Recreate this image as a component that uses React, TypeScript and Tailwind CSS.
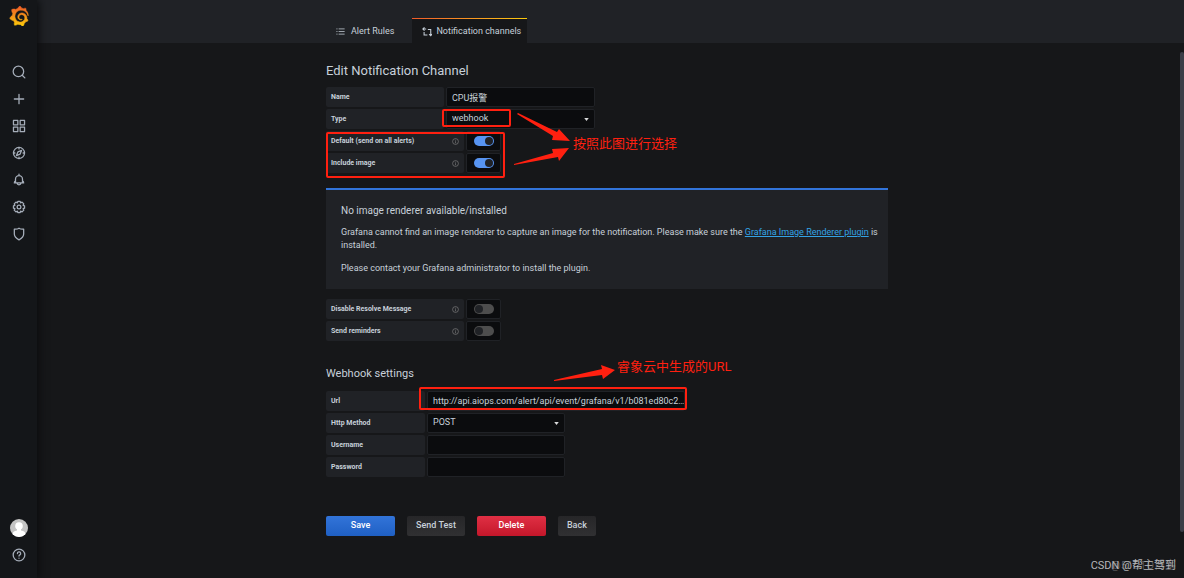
import { useState } from 'react';
import type { ReactNode } from 'react';
import { SiGrafana } from 'react-icons/si';

const NAV_ICONS: { label: string; icon: ReactNode }[] = [
  {
    label: 'Search',
    icon: (
      <>
        <circle cx="11" cy="11" r="9" />
        <path d="M17.500 17.500 22 22" />
      </>
    ),
  },
  { label: 'Create', icon: <path d="M12 4v16M4 12h16" /> },
  {
    label: 'Dashboards',
    icon: <path d="M2.5 2.5h7.5v7.5h-7.5zM14 2.5h7.5v7.5h-7.5zM2.5 14h7.5v7.5h-7.5zM14 14h7.5v7.5h-7.5z" />,
  },
  {
    label: 'Explore',
    icon: (
      <>
        <circle cx="12" cy="12" r="9.5" />
        <path d="m16.5 7.5-2.6 6.4-6.4 2.6 2.6-6.4zM12 2.5V5M12 19v2.5M2.5 12H5M19 12h2.5" />
      </>
    ),
  },
  {
    label: 'Alerting',
    icon: <path d="M12 2v2.5M6 17v-6.500a6 6 0 0 1 12 0V17M6 13.500c-1.500.500-2 1.500-2 3.500h16c0-2-.500-3-2-3.500M8.500 17.500a3.600 3.600 0 0 0 7 0" />,
  },
  {
    label: 'Configuration',
    icon: (
      <>
        <circle cx="12" cy="12" r="3.2" />
        <path d="m10 2.500h4l.700 2.300 2.600-1.100 2.900 2.900-1.100 2.600 2.400.800v4l-2.400.800 1.100 2.600-2.900 2.900-2.600-1.100-.700 2.300h-4l-.700-2.300-2.600 1.100-2.900-2.900 1.100-2.600-2.400-.800v-4l2.400-.800-1.100-2.600 2.900-2.900 2.600 1.100z" />
      </>
    ),
  },
  {
    label: 'Server Admin',
    icon: <path d="M4 3.500c3 .700 5.500.200 8-1.500 2.500 1.700 5 2.200 8 1.500v8.500c0 4.500-3 7.500-8 10-5-2.500-8-5.500-8-10z" />,
  },
];

function NavLink({ label, children }: { label: string; children: ReactNode }) {
  return (
    <a href="#" aria-label={label} className="flex h-[27px] items-center justify-center text-[#a5adb9]">
      <svg viewBox="0 0 24 24" className="size-[14px]" fill="none" stroke="currentColor" strokeWidth="2.2" strokeLinecap="round" strokeLinejoin="round">
        {children}
      </svg>
    </a>
  );
}

function Sidebar() {
  return (
    <nav className="z-10 flex w-[37px] shrink-0 flex-col bg-[#141619] pt-1.5 shadow-[2px_0_8px_#0b0c0e]">
      <svg className="absolute size-0" aria-hidden="true">
        <linearGradient id="flame" x1="0" y1="0" x2="0" y2="1">
          <stop offset="0" stopColor="#f05a28" />
          <stop offset="1" stopColor="#fbca0a" />
        </linearGradient>
      </svg>
      <a href="#" aria-label="Home" className="mb-8 flex justify-center">
        <SiGrafana size={20} fill="url(#flame)" stroke="url(#flame)" strokeWidth={0.7} />
      </a>
      {NAV_ICONS.map((item) => (
        <NavLink key={item.label} label={item.label}>{item.icon}</NavLink>
      ))}
      <div className="mt-auto pb-2.5">
        <a href="#" aria-label="Profile" className="flex h-[27px] items-center justify-center">
          <svg viewBox="0 0 18 18" className="size-[18px]">
            <clipPath id="avatar"><circle cx="9" cy="9" r="9" /></clipPath>
            <g clipPath="url(#avatar)">
              <rect width="18" height="18" fill="#c4c4c4" />
              <circle cx="9" cy="7" r="3.8" fill="#fff" />
              <path d="M7 9h4v2.500c3 .500 4.500 1.500 4.500 4V18h-13v-2.500c0-2.500 1.500-3.500 4.500-4z" fill="#fff" />
            </g>
          </svg>
        </a>
        <NavLink label="Help">
          <circle cx="12" cy="12" r="10" />
          <path d="M9.300 9.500a2.800 2.800 0 1 1 4.200 2.300c-1 .600-1.500 1-1.500 2M12 17.300v.2" />
        </NavLink>
      </div>
    </nav>
  );
}

function Tabs() {
  return (
    <header className="bg-[#202226] pr-[7px] pt-[18px]">
      <div className="mx-auto flex h-[25px] max-w-[562px] text-[9px] text-[#c7d0d9]">
        <a href="#" className="flex items-center gap-1.5 pl-2.5 pr-2 pt-0.5">
          <svg viewBox="0 0 24 24" className="size-[9px]" stroke="currentColor" strokeWidth="2">
            <path d="M1 5h3M7 5h16M1 12h3M7 12h16M1 19h3M7 19h16" />
          </svg>
          Alert Rules
        </a>
        <a href="#" aria-current="page" className="relative ml-2.5 flex items-center gap-1 bg-[#161719] pl-2.5 pr-1.5 pt-0.5">
          <span className="absolute inset-x-0 top-0 h-px bg-linear-to-r from-[#f05a28] to-[#fbca0a]" />
          <svg viewBox="0 0 24 24" className="size-[10px]" fill="none" stroke="currentColor" strokeWidth="2.5">
            <path d="M6 1 2 5l4 4M2 5h8M5 12v7h8M14 6h7v15M17 17l4 4 3-4" />
          </svg>
          Notification channels
        </a>
      </div>
    </header>
  );
}

const labelClass = 'flex h-5 shrink-0 items-center rounded-xs bg-[#202226] px-[5px] text-[7px] font-bold text-[#c7d0d9]';
const fieldClass = 'block h-5 w-full appearance-none rounded-xs border border-[#202226] bg-[#0b0c0e] pl-[5px] text-[9px] text-[#c7d0d9]';

function Caret() {
  return (
    <svg viewBox="0 0 6 4" className="pointer-events-none absolute right-1.5 top-[9px] h-[3px] w-[5px]" fill="#d8d9da">
      <path d="M0 0h6L3 4z" />
    </svg>
  );
}

function Field({ id, label, wide, children }: { id: string; label: string; wide?: boolean; children: ReactNode }) {
  return (
    <div className="flex gap-0.5">
      <label htmlFor={id} className={`${labelClass} ${wide ? 'w-[118px]' : 'w-[99px]'}`}>{label}</label>
      {children}
    </div>
  );
}

function SwitchRow({ id, label, initial }: { id: string; label: string; initial: boolean }) {
  const [on, setOn] = useState(initial);
  return (
    <div className="flex gap-0.5">
      <label htmlFor={id} className={`${labelClass} w-[138px] justify-between`}>
        {label}
        <svg viewBox="0 0 24 24" className="size-[7px] text-[#8e8e8e]" fill="none" stroke="currentColor" strokeWidth="2">
          <circle cx="12" cy="12" r="10" />
          <path d="M12 11v7M12 6v3" />
        </svg>
      </label>
      <div className="flex h-5 w-[35px] items-center justify-center rounded-xs border border-[#202226] bg-[#0b0c0e]">
        <input
          id={id}
          type="checkbox"
          role="switch"
          checked={on}
          onChange={(e) => setOn(e.target.checked)}
          className="flex h-2.5 w-5 appearance-none items-center rounded-full bg-[#4d4d4d] px-px before:size-2 before:rounded-full before:bg-[#202226] checked:justify-end checked:bg-[#5794f2]"
        />
      </div>
    </div>
  );
}

// red boxes, arrows and notes drawn over the form
function Annotations() {
  return (
    <div className="pointer-events-none absolute left-0 top-0 text-[13px] leading-[18px] text-[#ff2010]">
      <svg width="420" height="380" viewBox="0 0 420 380" className="overflow-visible" fill="none" stroke="#ff2010" strokeWidth="2">
        <rect x="117" y="67" width="67" height="16" rx="1" />
        <rect x="1" y="90" width="177" height="44" rx="1" />
        <rect x="94" y="345" width="266" height="21" rx="1" />
        <g fill="#ff2010" stroke="none">
          <path d="m191 71 36 22-1 4 18 1-11-12-2 3-39-19z" />
          <path d="m188 122 44-8 1 4 10-13-17 1 1 4-39 11z" />
          <path d="m228 338 48-6 1 4 12-9-14-5 1 4-48 11z" />
        </g>
      </svg>
      <span className="absolute left-[247px] top-[92px] whitespace-nowrap">按照此图进行选择</span>
      <span className="absolute left-[291px] top-[315px] whitespace-nowrap">睿象云中生成的URL</span>
    </div>
  );
}

const buttonClass = 'h-5 rounded-xs text-[9px] font-medium';

export default function App() {
  return (
    <div className="relative flex min-h-screen bg-[#161719] font-[Roboto,'Noto_Sans_CJK_SC',sans-serif] text-[#c7d0d9]">
      <Sidebar />
      <div className="min-w-0 flex-1">
        <Tabs />
        <main className="pr-[7px]">
          <form className="relative mx-auto max-w-[562px] pt-5" onSubmit={(e) => e.preventDefault()}>
            <h1 className="mb-2 text-[13px] leading-4">Edit Notification Channel</h1>
            <div className="flex flex-col gap-0.5">
              <Field id="name" label="Name" wide>
                <input id="name" defaultValue="CPU报警" className={`${fieldClass} max-w-[149px]`} />
              </Field>
              <Field id="type" label="Type" wide>
                <div className="relative w-[149px]">
                  <select id="type" className={fieldClass}><option>webhook</option></select>
                  <Caret />
                </div>
              </Field>
              <SwitchRow id="default" label="Default (send on all alerts)" initial />
              <SwitchRow id="image" label="Include image" initial />
            </div>

            <section className="mb-2.5 mt-[15px] border-t-2 border-[#3274d9] bg-[#202226] py-[14px] pl-[15px] pr-1 text-[9px] leading-[13px]">
              <h2 className="mb-2 text-[10px] leading-[14px]">No image renderer available/installed</h2>
              <p className="mb-2.5">
                Grafana cannot find an image renderer to capture an image for the notification. Please make sure the{' '}
                <a href="#" className="text-[#33a2e5] underline">Grafana Image Renderer plugin</a> is installed.
              </p>
              <p>Please contact your Grafana administrator to install the plugin.</p>
            </section>

            <div className="flex flex-col gap-0.5">
              <SwitchRow id="resolve" label="Disable Resolve Message" initial={false} />
              <SwitchRow id="reminders" label="Send reminders" initial={false} />
            </div>

            <h2 className="mb-[9px] mt-[25px] text-[11px] leading-4">Webhook settings</h2>
            <div className="flex flex-col gap-0.5">
              <Field id="url" label="Url">
                <input id="url" defaultValue="http://api.aiops.com/alert/api/event/grafana/v1/b081ed80c2…" className={`${fieldClass} max-w-[258px]`} />
              </Field>
              <Field id="method" label="Http Method">
                <div className="relative w-[138px]">
                  <select id="method" className={fieldClass}><option>POST</option></select>
                  <Caret />
                </div>
              </Field>
              <Field id="username" label="Username">
                <input id="username" className={`${fieldClass} max-w-[138px]`} />
              </Field>
              <Field id="password" label="Password">
                <input id="password" type="password" className={`${fieldClass} max-w-[138px]`} />
              </Field>
            </div>

            <div className="mt-[39px] flex gap-3">
              <button type="submit" className={`${buttonClass} w-[69px] bg-linear-to-b from-[#3274d9] to-[#1f60c4] text-white`}>Save</button>
              <button type="button" className={`${buttonClass} bg-linear-to-b from-[#262628] to-[#303032] px-[9px]`}>Send Test</button>
              <button type="button" className={`${buttonClass} w-[69px] bg-linear-to-b from-[#e02f44] to-[#c4162a] text-white`}>Delete</button>
              <button type="button" className={`${buttonClass} bg-linear-to-b from-[#262628] to-[#303032] px-[9px]`}>Back</button>
            </div>
            <Annotations />
          </form>
        </main>
      </div>
      <div className="absolute bottom-[46px] right-0 top-[52px] w-1 rounded-full bg-[#3b3e47]" />
      <div className="absolute bottom-1 right-2 text-[11px] leading-4 text-[#b5b6b8]">
        <span className="absolute right-0 top-0 text-[#55565a]" aria-hidden="true">@51CTO博客</span>
        <span className="relative">CSDN @帮主驾到</span>
      </div>
    </div>
  );
}
